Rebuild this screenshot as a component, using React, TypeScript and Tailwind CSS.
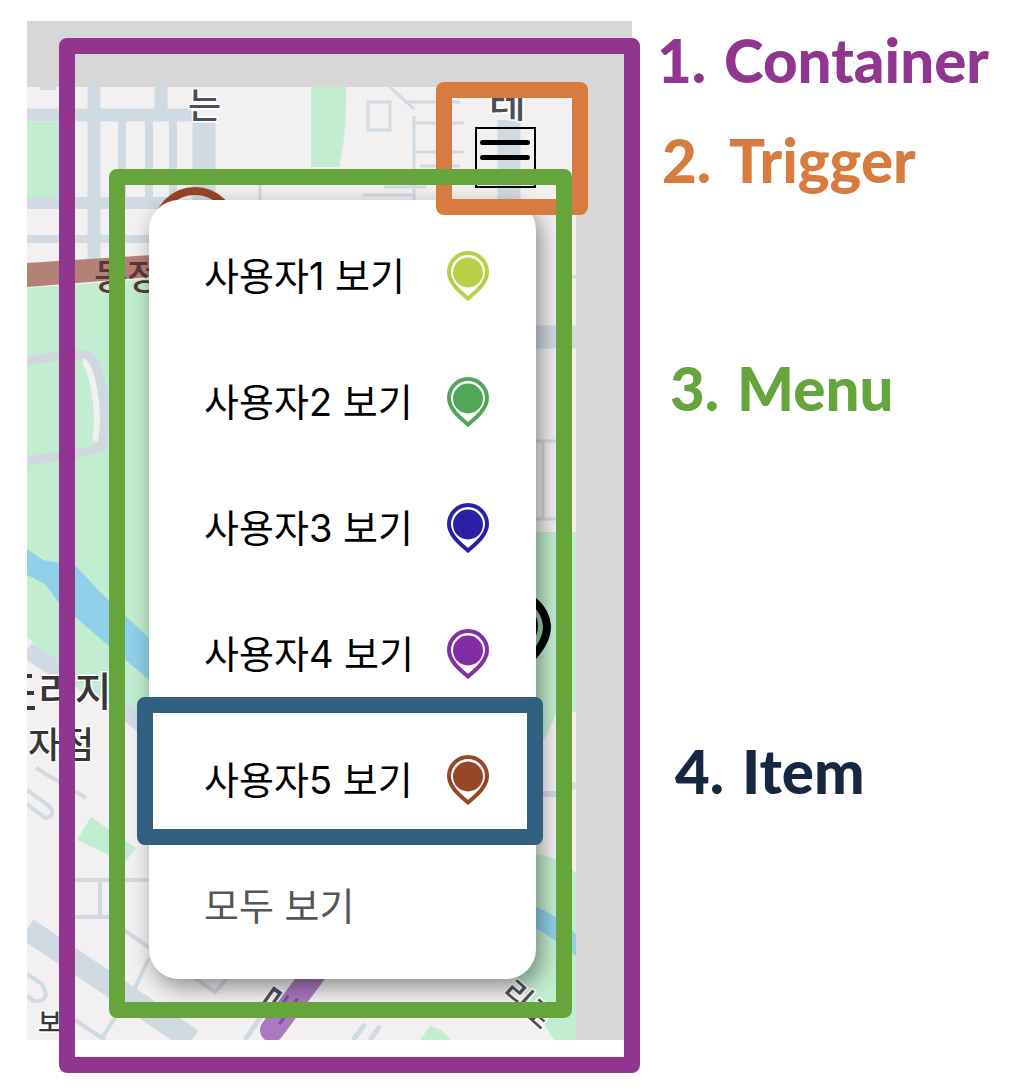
import React from "react";

const users = [
  { name: "사용자1 보기", color: "#b8d048" },
  { name: "사용자2 보기", color: "#52a657" },
  { name: "사용자3 보기", color: "#2a1fa5" },
  { name: "사용자4 보기", color: "#822da3" },
  { name: "사용자5 보기", color: "#984628" },
];

const legend = [
  { n: 1, label: "Container", className: "pl-[17px] text-[#91368f]" },
  { n: 2, label: "Trigger", className: "mt-5 pl-[22px] text-[#d77b3f]" },
  { n: 3, label: "Menu", className: "mt-[148px] pl-[30px] text-[#66a53c]" },
  { n: 4, label: "Item", className: "mt-[303px] pl-[35px] text-[#172742]" },
];

function Pin({ color }: { color: string }) {
  return (
    <svg viewBox="0 0 42 50" className="h-[50px] w-[42px]" aria-hidden="true">
      <path
        d="M21 47.5C13 40.5 2 32 2 21a19 19 0 0 1 38 0C40 32 29 40.500 21 47.500Z"
        fill="#fff"
        stroke={color}
        strokeWidth="4"
      />
      <circle cx="21" cy="21.500" r="15" fill={color} />
    </svg>
  );
}

function MapBackdrop() {
  return (
    <svg
      viewBox="27 21 605 1019"
      preserveAspectRatio="xMaxYMin slice"
      className="h-full w-full"
      aria-hidden="true"
    >
      <defs>
        <clipPath id="map-area">
          <rect x="27" y="87" width="549" height="953" />
        </clipPath>
      </defs>
      <rect x="27" y="21" width="605" height="1019" fill="#d7d7d7" />
      <g clipPath="url(#map-area)">
        <rect x="27" y="87" width="549" height="953" fill="#f2f0f1" />

        <g fill="#c2edd0">
          <path d="M27 122h32v76H27Z" />
          <path d="M311 87h35c1 30-2 60-7 80h-28Z" />
          <path d="M27 288l122-9v444l-40-20-30-13-52-54Z" />
          <path d="M530 532h46v180h-20q-10 35-26 35Z" />
          <path d="M91 817l45 31-11 14-48-22Z" />
          <path d="M520 853c24 0 38 5 56 20v167h-22l-40-64Z" />
          <path d="M420 1040l10-14c8 2 16 6 20 14Z" />
        </g>

        <g stroke="#d0dae2" fill="none">
          <path d="M27 115h165" strokeWidth="13" />
          <path d="M94 87v184M161 87v28" strokeWidth="13" />
          <path d="M204 120v80M509 120v80" strokeWidth="23" />
          <path d="M122 118v85M149 118v85M173 118v85" strokeWidth="8" />
          <path d="M27 203h140" strokeWidth="12" />
          <path d="M27 239h122" strokeWidth="8" />
          <path d="M530 337h46" strokeWidth="23" />
          <path d="M536 441h20M543 441v78M536 519h20M560 277h16M260 185v16" strokeWidth="3" />
          <path d="M40 88h16" strokeWidth="4" />
          <path d="M368 102h22v28h-22ZM390 87l24 22M404 102h56M414 116v86M414 123h50M414 152h50M420 166h40M384 187h42M363 195h50" strokeWidth="3" />
          <path d="M75 880h74M75 917h40M100 880v37M124 930l40 28M149 958l-15 32" strokeWidth="4" />
          <path d="M27 790l22 16q8 10-4 12L27 804M27 974l15 10q10 18-8 17l-7-5M36 768l50 30M75 1020l30 20M120 1010l-18 28M195 978l20 14 18-20" strokeWidth="4" />
          <path d="M27 929l165 111" strokeWidth="23" />
          <path d="M27 650l50 33M120 708l35 25" strokeWidth="17" />
          <path d="M264 1012l-19 28M365 1024l-12 16M380 1026l-10 14" strokeWidth="5" />
          <path d="M536 794h27l13-10" strokeWidth="6" />
        </g>
        <path
          d="M27 361c30-5 50-8 62-5 10 10 21 45 13 90-18 8-42 10-75 15"
          fill="none"
          stroke="#d0d7de"
          strokeWidth="9"
        />
        <path d="M83 361c8 3 18 50 12 80" fill="none" stroke="#f2f0f1" strokeWidth="6" />

        <g fill="#90d0e8">
          <path d="M27 549l16 11 33 6 24 26 49 46v42L60 604 45 584 27 575Z" />
          <path d="M520 900c22 8 40 18 56 34v22c-16-12-30-24-56-35Z" />
        </g>

        <path d="M27 263l125-8v22l-125 10Z" fill="#b48176" />

        <path d="M27 676h5M27 693h7M27 708h8" stroke="#393637" strokeWidth="4" />
        <g
          fill="#4c4f59"
          stroke="#fff"
          strokeWidth="3"
          paintOrder="stroke"
          fontFamily='"Noto Sans CJK KR", sans-serif'
          fontWeight="500"
        >
          <text x="188" y="119" fontSize="36">는</text>
          <text x="489" y="117" fontSize="40">테</text>
          <text x="94" y="290" fontSize="36" fill="#58383a" stroke="none">동정</text>
          <text x="38" y="706" fontSize="40" fill="#393637">리지</text>
          <text x="28" y="758" fontSize="36" fill="#393637">자점</text>
          <text x="38" y="1032" fontSize="26" fill="#393637">보</text>
          <text x="500" y="994" fontSize="30" transform="rotate(42 500 994)">리로</text>
          <text x="268" y="1017" fontSize="38" transform="rotate(-55 284 1010)">로</text>
        </g>

        <path
          d="M318 968l-46 62"
          stroke="#9450ae"
          strokeOpacity="0.75"
          strokeWidth="24"
          strokeLinecap="round"
        />

        <circle cx="195" cy="229" r="38" fill="none" stroke="#984628" strokeWidth="8" />
        <path
          d="M511 594a35 35 0 0 1 36 32c0 13-6 22-22 40"
          fill="#9fd0b0"
          stroke="#000"
          strokeWidth="8"
        />
        <circle cx="514" cy="626" r="24" fill="#000" />
      </g>
    </svg>
  );
}

export default function App() {
  return (
    <main className="flex min-h-screen items-start bg-white">
      <section className="relative min-w-[640px] flex-1 pt-[38px] pl-[59px]" aria-label="Dropdown anatomy">
        <div className="absolute top-[21px] right-2 bottom-[33px] left-[27px]">
          <MapBackdrop />
        </div>

        <div className="relative flex flex-col items-end rounded-lg border-16 border-[#91368f] pt-7 pr-9 pb-[39px]">
          <div className="relative z-10 flex h-[133px] w-[152px] justify-center rounded-lg border-16 border-[#d77b3f] pt-[29px] pr-[14px]">
            <button
              type="button"
              aria-label="메뉴 열기"
              aria-expanded="true"
              className="flex size-[61px] flex-col items-center gap-[10px] border-2 border-black pt-[11px]"
            >
              <span className="h-[5px] w-[50px] rounded-full bg-black" />
              <span className="h-[5px] w-[50px] rounded-full bg-black" />
              <span className="h-[5px] w-[50px] rounded-full bg-black" />
            </button>
          </div>

          <div className="relative -mt-[46px] mr-4 w-[463px] pt-[31px] pr-9 pb-[39px] pl-10">
            <ul className="rounded-[30px] bg-white pt-[13px] pb-[10px] font-[Inter,'Noto_Sans_CJK_KR',sans-serif] text-[38px] leading-[56px] text-black shadow-[5px_8px_22px_rgba(0,0,0,0.42)]">
              {users.map((user, index) => (
                <li key={user.name} className="relative">
                  <button
                    type="button"
                    className="flex h-[126px] w-full items-center justify-between pr-[47px] pl-[55px]"
                  >
                    <span>{user.name}</span>
                    <Pin color={user.color} />
                  </button>
                  {index === users.length - 1 && (
                    <span className="pointer-events-none absolute -top-5 -right-[7px] -bottom-0.5 -left-3 z-30 rounded-lg border-16 border-[#315f80]" />
                  )}
                </li>
              ))}
              <li>
                <button
                  type="button"
                  className="flex h-[126px] w-full items-center pl-[55px] text-[#555]"
                >
                  모두 보기
                </button>
              </li>
            </ul>
            <span className="pointer-events-none absolute inset-0 z-20 rounded-lg border-16 border-[#66a53c]" />
          </div>
        </div>
      </section>

      <ol className="w-[382px] shrink-0 pt-5 font-[Lato,sans-serif] text-[60px] leading-[80px] font-black">
        {legend.map((entry) => (
          <li key={entry.n} className={`flex gap-[18px] ${entry.className}`}>
            <span>{entry.n}.</span>
            <span>{entry.label}</span>
          </li>
        ))}
      </ol>
    </main>
  );
}
